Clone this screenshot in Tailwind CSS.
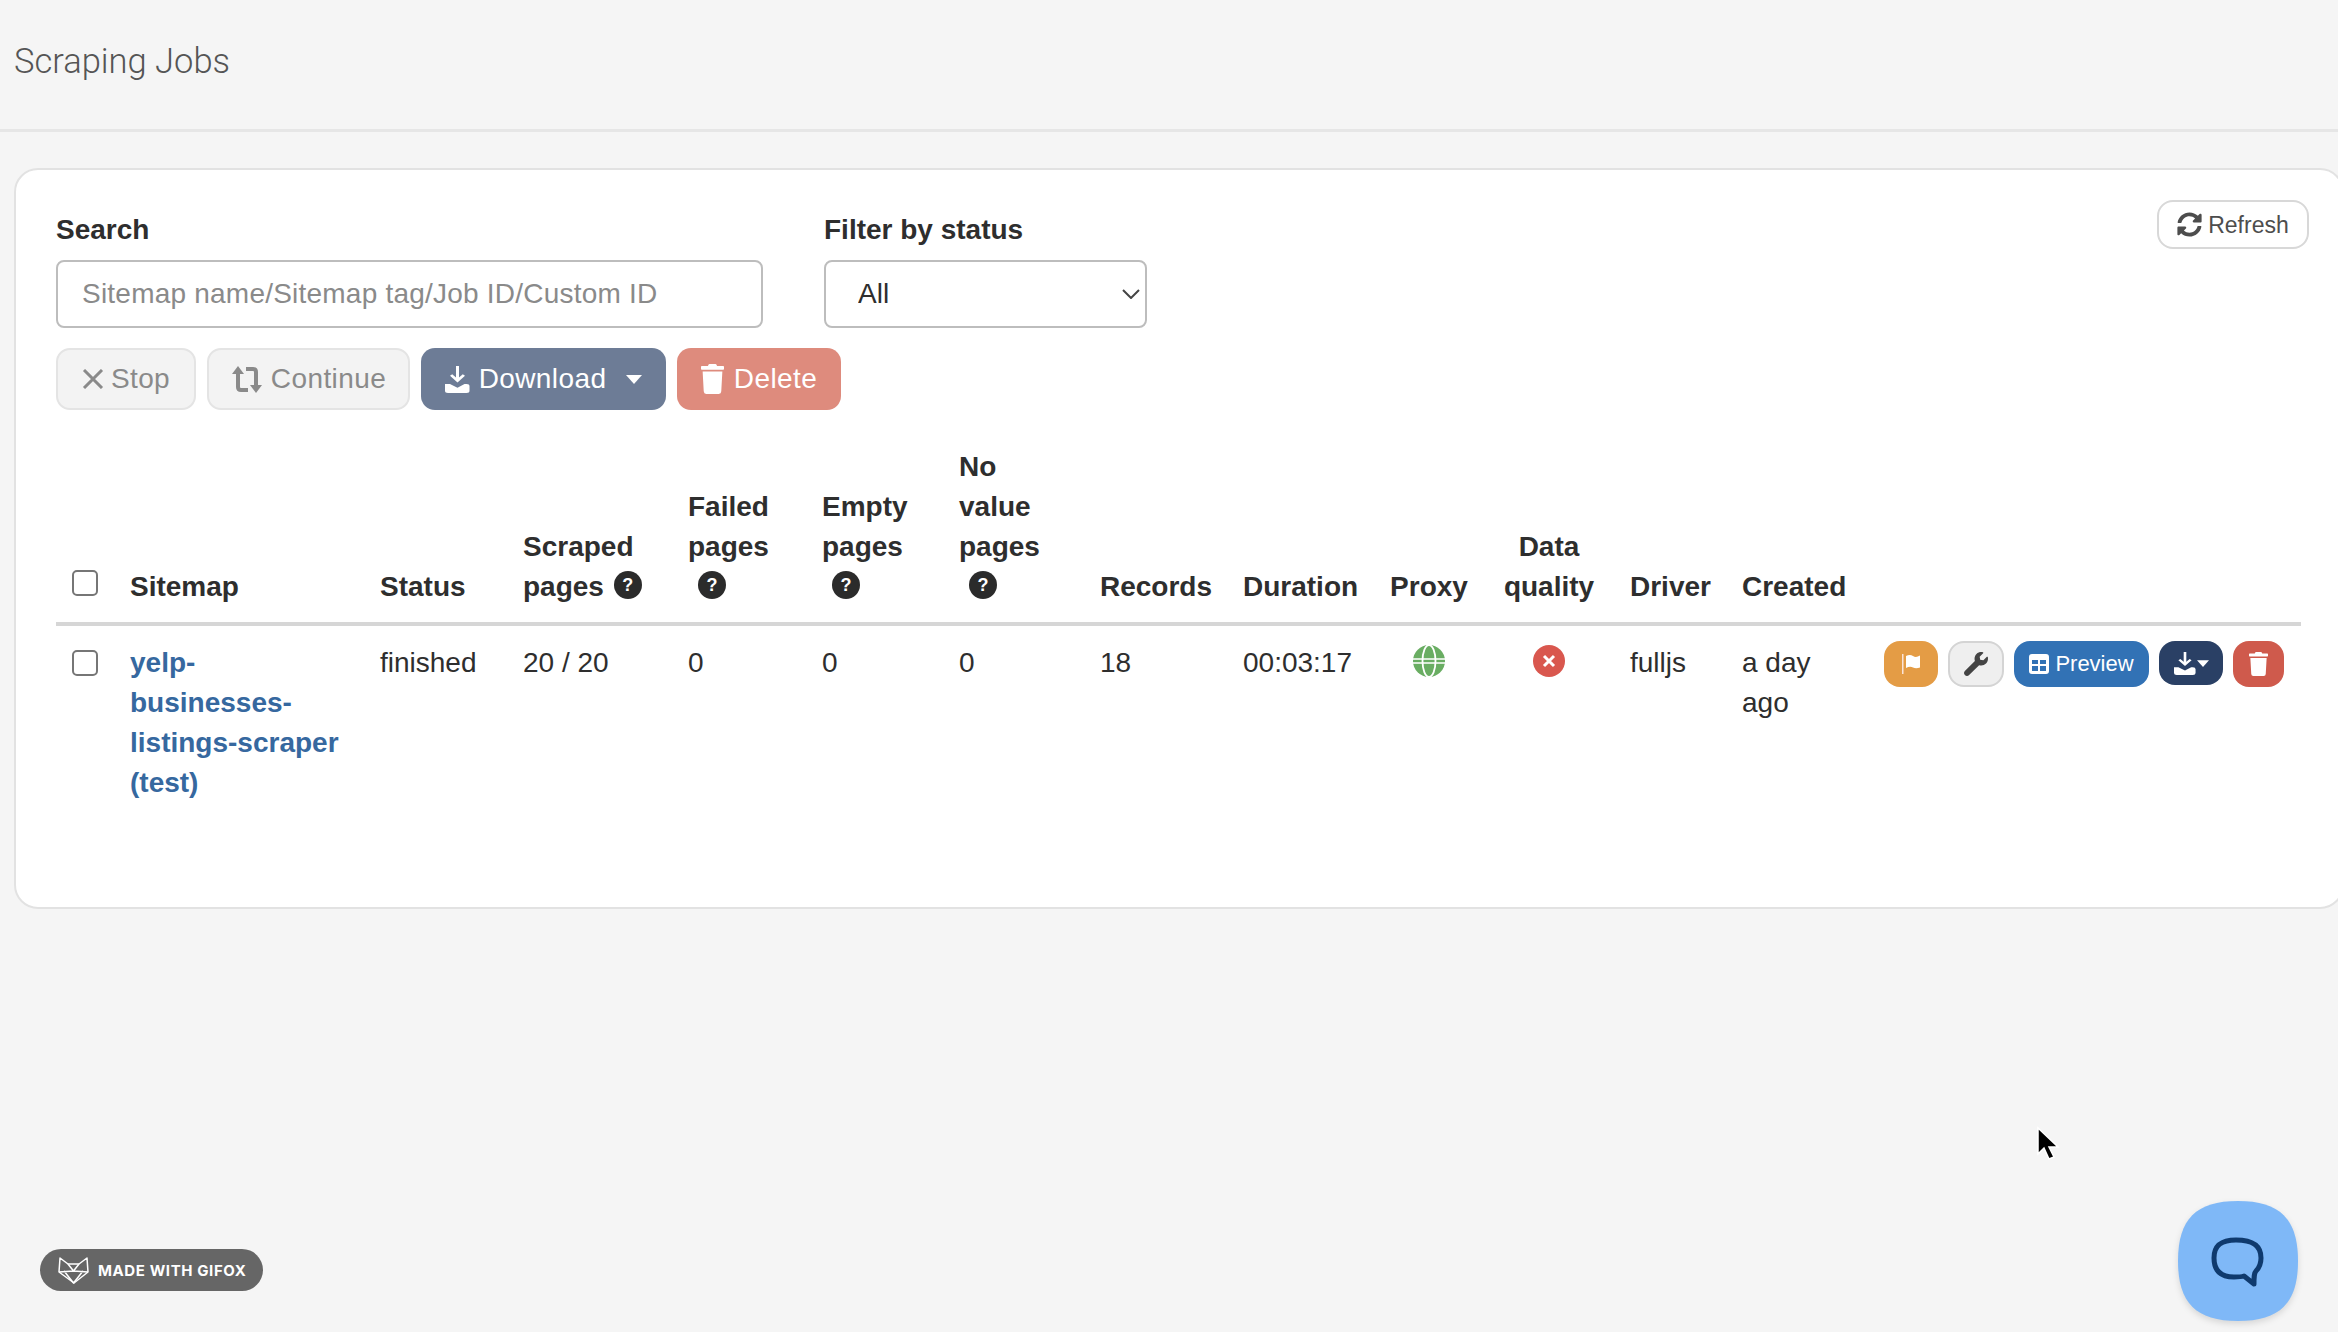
<!DOCTYPE html>
<html lang="en">
<head>
<meta charset="utf-8">
<title>Scraping Jobs</title>
<script src="https://cdn.jsdelivr.net/npm/@tailwindcss/browser@4"></script>
</head>
<body class="relative h-[1332px] w-[2338px] overflow-hidden bg-[#f5f5f5] font-['Liberation_Sans',Arial,sans-serif] text-[28px] leading-[40px] text-[#2e2e2e]">

<header class="h-[132px] border-b-[3px] border-[#e6e6e6] pl-[14px] pt-[37px]">
  <h1 class="font-['Roboto',sans-serif] text-[34.5px] font-light leading-[48px] text-[#555]">Scraping Jobs</h1>
</header>

<main class="ml-[14px] mr-[-6px] mt-[36px] h-[741px] rounded-[24px] border-2 border-[#e2e2e2] bg-white pl-[40px] pr-[44px] pt-[40px]">
  <div class="flex items-start justify-between">
    <div class="flex gap-[61px]">
      <div class="w-[707px]">
        <label class="mb-[10px] block font-bold">Search</label>
        <input type="text" placeholder="Sitemap name/Sitemap tag/Job ID/Custom ID" class="h-[68px] w-full rounded-[8px] border-2 border-[#bdbdbd] bg-white px-[24px] tracking-[0.22px] placeholder:text-[#8a8a8a]">
      </div>
      <div class="w-[323px]">
        <label class="mb-[10px] block font-bold">Filter by status</label>
        <div class="relative">
          <select class="h-[68px] w-full appearance-none rounded-[8px] border-2 border-[#bdbdbd] bg-white pl-[32px]"><option>All</option></select>
          <svg class="pointer-events-none absolute right-[7px] top-[29px] h-[10px] w-[18px]" viewBox="0 0 18 10" fill="none" stroke="#444" stroke-width="2"><path d="M1 1l8 8 8-8"/></svg>
        </div>
      </div>
    </div>
    <button class="mr-[-11px] mt-[-10px] flex h-[49px] w-[152px] items-center justify-center gap-[6px] rounded-[16px] border-2 border-[#d8d8d8] bg-white text-[23px] text-[#4d4d4d]">
      <svg class="h-[25px] w-[25px]" viewBox="0 0 512 512" fill="#4d4d4d"><path d="M370.72 133.28C339.458 104.008 298.888 87.962 255.848 88c-77.458.068-144.328 53.178-162.791 126.85-1.344 5.363-6.122 9.15-11.651 9.15H24.103c-7.498 0-13.194-6.807-11.807-14.176C33.933 94.924 134.813 8 256 8c66.448 0 126.791 26.136 171.315 68.685L463.03 40.97C478.149 25.851 504 36.559 504 57.941V192c0 13.255-10.745 24-24 24H345.941c-21.382 0-32.09-25.851-16.971-40.971l41.75-41.749zM32 296h134.059c21.382 0 32.09 25.851 16.971 40.971l-41.75 41.75c31.262 29.273 71.835 45.319 114.876 45.28 77.418-.07 144.315-53.144 162.787-126.849 1.344-5.363 6.122-9.15 11.651-9.15h57.304c7.498 0 13.194 6.807 11.807 14.176C478.067 417.076 377.187 504 256 504c-66.448 0-126.791-26.136-171.315-68.685L48.97 471.03C33.851 486.149 8 475.441 8 454.059V320c0-13.255 10.745-24 24-24z"/></svg>
      Refresh
    </button>
  </div>

  <div class="mt-[20px] flex gap-[11px] tracking-[0.4px]">
    <button class="flex h-[62px] w-[140px] items-center justify-center gap-[7px] rounded-[14px] border-2 border-[#e4e4e4] bg-[#f3f3f3] text-[#8a8a8a]">
      <svg class="h-[20px] w-[22px]" viewBox="0 0 22 20" fill="none" stroke="#8a8a8a" stroke-width="3"><path d="M2 1l18 18M20 1L2 19"/></svg>
      Stop
    </button>
    <button class="flex h-[62px] w-[203px] items-center justify-center gap-[8px] rounded-[14px] border-2 border-[#e4e4e4] bg-[#f3f3f3] text-[#8a8a8a]">
      <svg class="h-[27px] w-[32px]" viewBox="0 0 32 27" fill="none" stroke="#8a8a8a" stroke-width="4"><path d="M7 7v14q0 3 3 3h7M25 20V6q0-3-3-3h-7"/><path d="M7 0L1 8h12zM25 27l-6-8h12z" fill="#8a8a8a" stroke="none"/></svg>
      Continue
    </button>
    <button class="flex h-[62px] w-[245px] items-center justify-center rounded-[14px] bg-[#6d7c96] text-white">
      <svg class="mr-[9px] h-[27px] w-[25px]" viewBox="0 0 25 36" preserveAspectRatio="none" fill="#fff"><path d="M11 0h3v18h-3z"/><path d="M5 13l7.500 9 7.500-9-2.200-2-5.300 6-5.300-6z"/><path d="M0 24h5l7.500 5 7-5h2q3 0 3 3v6q0 3-3 3H3q-3 0-3-3z"/></svg>
      Download
      <svg class="ml-[20px] h-[9px] w-[16px]" viewBox="0 0 16 9" fill="#fff"><path d="M0 0h16L8 9z"/></svg>
    </button>
    <button class="flex h-[62px] w-[164px] items-center justify-center gap-[10px] rounded-[14px] bg-[#de8b7d] text-white">
      <svg class="h-[30px] w-[23px]" viewBox="0 0 448 512" preserveAspectRatio="none" fill="#fff"><path d="M432 32H312l-9.400-18.700A24 24 0 0 0 281.100 0H166.800a23.720 23.720 0 0 0-21.400 13.300L136 32H16A16 16 0 0 0 0 48v32a16 16 0 0 0 16 16h416a16 16 0 0 0 16-16V48a16 16 0 0 0-16-16zM53.200 467a48 48 0 0 0 47.900 45h245.800a48 48 0 0 0 47.900-45L416 128H32z"/></svg>
      Delete
    </button>
  </div>

  <table class="mt-[21px] w-[2245px] table-fixed border-collapse">
    <colgroup>
      <col class="w-[58px]"><col class="w-[250px]"><col class="w-[143px]"><col class="w-[165px]"><col class="w-[134px]"><col class="w-[137px]"><col class="w-[141px]"><col class="w-[143px]"><col class="w-[147px]"><col class="w-[110px]"><col class="w-[130px]"><col class="w-[112px]"><col class="w-[138px]"><col class="w-[437px]">
    </colgroup>
    <thead>
      <tr class="border-b-4 border-[#d6d6d6] text-left align-bottom font-bold">
        <th class="px-[16px] pb-[26px] pt-[16px]"><input type="checkbox" class="block h-[26px] w-[26px] appearance-none rounded-[5px] border-2 border-[#767676] bg-white"></th>
        <th class="px-[16px] pb-[15px] pt-[16px]">Sitemap</th>
        <th class="px-[16px] pb-[15px] pt-[16px]">Status</th>
        <th class="px-[16px] pb-[15px] pt-[16px]">Scraped pages <span class="ml-[2px] inline-flex h-[28px] w-[28px] items-center justify-center rounded-full bg-[#2b2b2b] align-[5px] text-[18px] leading-none text-white">?</span></th>
        <th class="px-[16px] pb-[15px] pt-[16px]">Failed pages <span class="ml-[10px] inline-flex h-[28px] w-[28px] items-center justify-center rounded-full bg-[#2b2b2b] align-[5px] text-[18px] leading-none text-white">?</span></th>
        <th class="px-[16px] pb-[15px] pt-[16px]">Empty pages <span class="ml-[10px] inline-flex h-[28px] w-[28px] items-center justify-center rounded-full bg-[#2b2b2b] align-[5px] text-[18px] leading-none text-white">?</span></th>
        <th class="px-[16px] pb-[15px] pt-[16px]">No value pages <span class="ml-[10px] inline-flex h-[28px] w-[28px] items-center justify-center rounded-full bg-[#2b2b2b] align-[5px] text-[18px] leading-none text-white">?</span></th>
        <th class="px-[16px] pb-[15px] pt-[16px]">Records</th>
        <th class="px-[16px] pb-[15px] pt-[16px]">Duration</th>
        <th class="px-[16px] pb-[15px] pt-[16px] text-center">Proxy</th>
        <th class="px-[16px] pb-[15px] pt-[16px] text-center">Data quality</th>
        <th class="px-[16px] pb-[15px] pt-[16px]">Driver</th>
        <th class="px-[16px] pb-[15px] pt-[16px]">Created</th>
        <th></th>
      </tr>
    </thead>
    <tbody>
      <tr class="align-top">
        <td class="px-[16px] pb-[16px] pt-[24px]"><input type="checkbox" class="block h-[26px] w-[26px] appearance-none rounded-[5px] border-2 border-[#767676] bg-white"></td>
        <td class="px-[16px] pb-[16px] pt-[17px]"><a href="#" class="font-bold text-[#36689f]">yelp-businesses-listings-scraper (test)</a></td>
        <td class="px-[16px] pb-[16px] pt-[17px]">finished</td>
        <td class="px-[16px] pb-[16px] pt-[17px]">20 / 20</td>
        <td class="px-[16px] pb-[16px] pt-[17px]">0</td>
        <td class="px-[16px] pb-[16px] pt-[17px]">0</td>
        <td class="px-[16px] pb-[16px] pt-[17px]">0</td>
        <td class="px-[16px] pb-[16px] pt-[17px]">18</td>
        <td class="px-[16px] pb-[16px] pt-[17px]">00:03:17</td>
        <td class="px-[16px] pb-[16px] pt-[19px]">
          <svg class="mx-auto block h-[32px] w-[32px]" viewBox="0 0 32 32"><circle cx="16" cy="16" r="16" fill="#69ad62"/><ellipse cx="16" cy="16" rx="6.500" ry="16" fill="none" stroke="#fff" stroke-width="1.800"/><path d="M0 14h32M0 18h32" stroke="#fff" stroke-width="1.500"/></svg>
        </td>
        <td class="px-[16px] pb-[16px] pt-[19px]">
          <svg class="mx-auto block h-[32px] w-[32px]" viewBox="0 0 32 32"><circle cx="16" cy="16" r="16" fill="#d9574e"/><path d="M11 11l10 10M21 11L11 21" stroke="#fff" stroke-width="3"/></svg>
        </td>
        <td class="px-[16px] pb-[16px] pt-[17px]">fulljs</td>
        <td class="px-[16px] pb-[16px] pt-[17px]">a day ago</td>
        <td class="pl-[20px] pt-[15px]">
          <div class="flex items-start gap-[10px]">
            <button class="flex h-[46px] w-[54px] items-center justify-center rounded-[16px] bg-[#e49c45]">
              <svg class="h-[20px] w-[20px]" viewBox="0 0 20 20"><path d="M1 0h1.500v20H1z" fill="#fbe3d8"/><path d="M5 2q4-2 7 0t7-.500v12q-4 1.500-7 0t-7 .500z" fill="#fff"/></svg>
            </button>
            <button class="flex h-[46px] w-[56px] items-center justify-center rounded-[16px] border-2 border-[#d4d4d4] bg-[#efefef]">
              <svg class="h-[24px] w-[24px]" viewBox="0 0 512 512" fill="#444"><path d="M507.730 109.100c-2.240-9.030-13.540-12.090-20.120-5.510l-74.360 74.360-67.880-11.310-11.310-67.880 74.360-74.360c6.620-6.620 3.430-17.900-5.660-20.160-47.380-11.740-99.550.910-136.580 37.930-39.640 39.640-50.550 97.100-34.050 147.200L18.740 402.760c-24.990 24.990-24.990 65.510 0 90.500 24.990 24.990 65.510 24.990 90.500 0l213.210-213.210c50.120 16.710 107.470 5.680 147.370-34.220 37.070-37.070 49.700-89.320 37.910-136.730z"/></svg>
            </button>
            <button class="flex h-[46px] w-[135px] items-center justify-center gap-[6px] rounded-[16px] bg-[#3272b5] text-[22px] text-white">
              <svg class="h-[20px] w-[20px]" viewBox="0 0 20 20" fill="#fff"><path fill-rule="evenodd" d="M3 0h14q3 0 3 3v14q0 3-3 3H3q-3 0-3-3V3q0-3 3-3zM3 6v4h6V6zm8 0v4h6V6zM3 12v5h6v-5zm8 0v5h6v-5z"/></svg>
              Preview
            </button>
            <button class="flex h-[44px] w-[64px] items-center justify-center gap-[1px] rounded-[16px] bg-[#2a4065]">
              <svg class="h-[23px] w-[22px]" viewBox="0 0 25 36" preserveAspectRatio="none" fill="#fff"><path d="M11 0h3v18h-3z"/><path d="M5 13l7.500 9 7.500-9-2.200-2-5.300 6-5.300-6z"/><path d="M0 24h5l7.500 5 7-5h2q3 0 3 3v6q0 3-3 3H3q-3 0-3-3z"/></svg>
              <svg class="h-[7px] w-[12px]" viewBox="0 0 16 9" fill="#fff"><path d="M0 0h16L8 9z"/></svg>
            </button>
            <button class="flex h-[46px] w-[51px] items-center justify-center rounded-[16px] bg-[#cf5a4c]">
              <svg class="h-[24px] w-[19px]" viewBox="0 0 448 512" preserveAspectRatio="none" fill="#fff"><path d="M432 32H312l-9.400-18.700A24 24 0 0 0 281.100 0H166.800a23.720 23.720 0 0 0-21.400 13.300L136 32H16A16 16 0 0 0 0 48v32a16 16 0 0 0 16 16h416a16 16 0 0 0 16-16V48a16 16 0 0 0-16-16zM53.200 467a48 48 0 0 0 47.900 45h245.800a48 48 0 0 0 47.900-45L416 128H32z"/></svg>
            </button>
          </div>
        </td>
      </tr>
    </tbody>
  </table>
</main>

<svg class="absolute left-[2036px] top-[1126px] h-[36px] w-[24px]" viewBox="0 0 24 36"><path d="M2 2v26l6-6 5 11 5-2-5-10h9z" fill="#000" stroke="#fff" stroke-width="1.500"/></svg>

<div class="absolute left-[40px] top-[1249px] flex h-[42px] w-[223px] items-center gap-[9px] rounded-full bg-[#666] pl-[18px] font-['Inter',sans-serif] text-[15px] font-bold leading-none tracking-[0.6px] text-white">
  <svg class="h-[27px] w-[31px]" viewBox="0 0 31 27" fill="none" stroke="#fff" stroke-width="1.500" stroke-linejoin="round"><path d="M2 1l8 6h11l8-6 1 14-14 11L1 15z"/><path d="M10 7l5.500 7L21 7M1 15l14.500-1L30 15M6 14l9.500 12L25 14"/></svg>
  MADE WITH GIFOX
</div>

<button class="absolute left-[2178px] top-[1201px] h-[120px] w-[120px]">
  <svg class="block h-[120px] w-[120px] drop-shadow-md" viewBox="0 0 120 120">
    <path d="M60 0C102 0 120 18 120 60S102 120 60 120 0 102 0 60 18 0 60 0z" fill="#7fb8f7"/>
    <path d="M58 39C74 39 83 44 83 57 83 63 81 67 78 70 76 72 76 76 76 83L66 75C63 76 60 76 56 76 43 76 36 70 36 57 36 44 44 39 58 39z" fill="none" stroke="#0f3a6e" stroke-width="5" stroke-linejoin="round"/>
  </svg>
</button>

</body>
</html>
